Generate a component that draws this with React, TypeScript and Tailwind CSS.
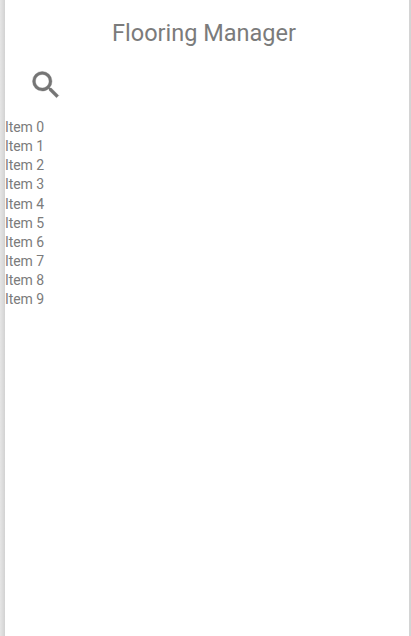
const items = Array.from({ length: 10 }, (_, i) => `Item ${i}`);

export default function App() {
  return (
    <div className="flex h-[636px] w-[411px] bg-white font-['Roboto',sans-serif] text-[#7b7b7b]">
      <div className="w-[5px] shrink-0 bg-linear-to-r from-[#e6e6e6] to-[#d2d2d2]" />
      <main className="flex min-w-0 flex-1 flex-col">
        <h1 className="mt-[17px] pr-[6px] text-center text-[23.5px] leading-8">Flooring Manager</h1>
        <svg className="mt-[17.5px] ml-[22.5px] size-9 text-[#757575]" viewBox="0 0 24 24" fill="currentColor" stroke="currentColor" strokeWidth="0.25" strokeLinejoin="round">
          <path d="M15.5 14h-.79l-.28-.27A6.471 6.471 0 0 0 16 9.5 6.5 6.5 0 1 0 9.5 16c1.61 0 3.09-.59 4.23-1.57l.27.28v.79l5 4.99L20.49 19l-4.99-5zm-6 0C7.01 14 5 11.99 5 9.5S7.01 5 9.5 5 14 7.01 14 9.5 11.99 14 9.5 14z" />
        </svg>
        <ul className="mt-[15.5px] text-[14px] leading-[19.15px] tracking-[-0.08px]">
          {items.map((item) => <li key={item}>{item}</li>)}
        </ul>
      </main>
      <div className="w-[2px] shrink-0 bg-[#d4d4d4]" />
    </div>
  );
}
